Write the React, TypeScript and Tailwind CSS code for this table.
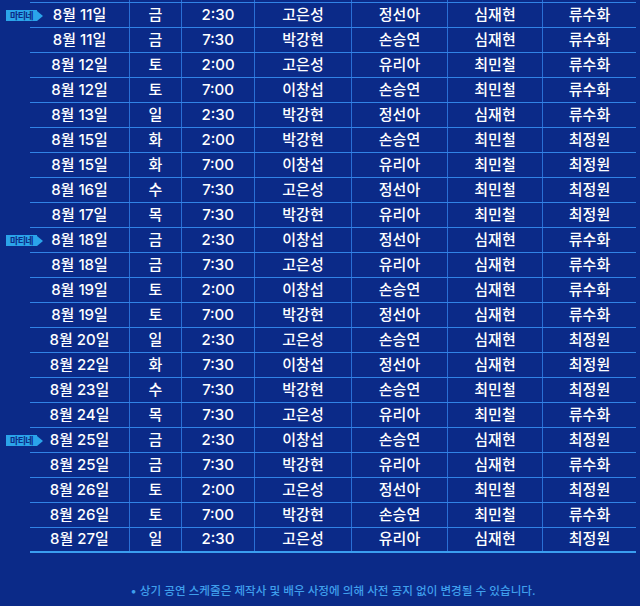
type Show = {
  date: string;
  day: string;
  time: string;
  cast: [string, string, string, string];
  matinee?: boolean;
};

const shows: Show[] = [
  { date: "8월 11일", day: "금", time: "2:30", cast: ["고은성", "정선아", "심재현", "류수화"], matinee: true },
  { date: "8월 11일", day: "금", time: "7:30", cast: ["박강현", "손승연", "심재현", "류수화"] },
  { date: "8월 12일", day: "토", time: "2:00", cast: ["고은성", "유리아", "최민철", "류수화"] },
  { date: "8월 12일", day: "토", time: "7:00", cast: ["이창섭", "손승연", "최민철", "류수화"] },
  { date: "8월 13일", day: "일", time: "2:30", cast: ["박강현", "정선아", "심재현", "류수화"] },
  { date: "8월 15일", day: "화", time: "2:00", cast: ["박강현", "손승연", "최민철", "최정원"] },
  { date: "8월 15일", day: "화", time: "7:00", cast: ["이창섭", "유리아", "최민철", "최정원"] },
  { date: "8월 16일", day: "수", time: "7:30", cast: ["고은성", "정선아", "최민철", "최정원"] },
  { date: "8월 17일", day: "목", time: "7:30", cast: ["박강현", "유리아", "최민철", "최정원"] },
  { date: "8월 18일", day: "금", time: "2:30", cast: ["이창섭", "정선아", "심재현", "류수화"], matinee: true },
  { date: "8월 18일", day: "금", time: "7:30", cast: ["고은성", "유리아", "심재현", "류수화"] },
  { date: "8월 19일", day: "토", time: "2:00", cast: ["이창섭", "손승연", "심재현", "류수화"] },
  { date: "8월 19일", day: "토", time: "7:00", cast: ["박강현", "정선아", "심재현", "류수화"] },
  { date: "8월 20일", day: "일", time: "2:30", cast: ["고은성", "손승연", "심재현", "최정원"] },
  { date: "8월 22일", day: "화", time: "7:30", cast: ["이창섭", "정선아", "심재현", "최정원"] },
  { date: "8월 23일", day: "수", time: "7:30", cast: ["박강현", "손승연", "최민철", "최정원"] },
  { date: "8월 24일", day: "목", time: "7:30", cast: ["고은성", "유리아", "최민철", "류수화"] },
  { date: "8월 25일", day: "금", time: "2:30", cast: ["이창섭", "손승연", "심재현", "최정원"], matinee: true },
  { date: "8월 25일", day: "금", time: "7:30", cast: ["박강현", "유리아", "심재현", "류수화"] },
  { date: "8월 26일", day: "토", time: "2:00", cast: ["고은성", "정선아", "최민철", "최정원"] },
  { date: "8월 26일", day: "토", time: "7:00", cast: ["박강현", "손승연", "최민철", "류수화"] },
  { date: "8월 27일", day: "일", time: "2:30", cast: ["고은성", "유리아", "심재현", "최정원"] },
];

const cols = "grid grid-cols-[99px_52px_73px_97px_96px_95px_94px]";
const cell = "flex items-center justify-center border-l border-[#2a6fd4]";

function MatineeBadge() {
  return (
    <div className="absolute left-[-24px] top-[7px] flex h-[11px] items-center">
      <div className="flex h-[11px] w-[31px] items-center justify-center bg-[#2ba4ea] text-[9px] font-bold leading-none tracking-[-0.6px] text-[#0b2a86]">
        마티네
      </div>
      <div className="h-0 w-0 border-y-[5.5px] border-l-[6px] border-y-transparent border-l-[#2ba4ea]" />
    </div>
  );
}

export default function App() {
  return (
    <div
      className="h-[606px] w-[640px] overflow-hidden bg-[#0b2a88] text-white"
      style={{ fontFamily: '"Inter", "Noto Sans CJK KR", sans-serif' }}
    >
      <div className="ml-[30px] w-[606px]">
        <div className={`${cols} h-[2px]`}>
          <div />
          <div className={cell} />
          <div className={cell} />
          <div className={cell} />
          <div className={cell} />
          <div className={cell} />
          <div className={cell} />
        </div>
        <div className="border-t border-[#3183e6]">
          {shows.map((s, i) => (
            <div
              key={i}
              className={`${cols} relative h-[25px] text-[15px] font-medium ${
                i === shows.length - 1 ? "border-b-2 border-[#3a9ef0]" : "border-b border-[#3183e6]"
              }`}
            >
              {s.matinee && <MatineeBadge />}
              <div className="flex items-center justify-center">{s.date}</div>
              <div className={cell}>{s.day}</div>
              <div className={cell}>{s.time}</div>
              {s.cast.map((c, j) => (
                <div key={j} className={cell}>
                  {c}
                </div>
              ))}
            </div>
          ))}
        </div>
        <p className="mt-[30px] text-center text-[11.6px] font-medium text-[#3f9fec]">
          • 상기 공연 스케줄은 제작사 및 배우 사정에 의해 사전 공지 없이 변경될 수 있습니다.
        </p>
      </div>
    </div>
  );
}
